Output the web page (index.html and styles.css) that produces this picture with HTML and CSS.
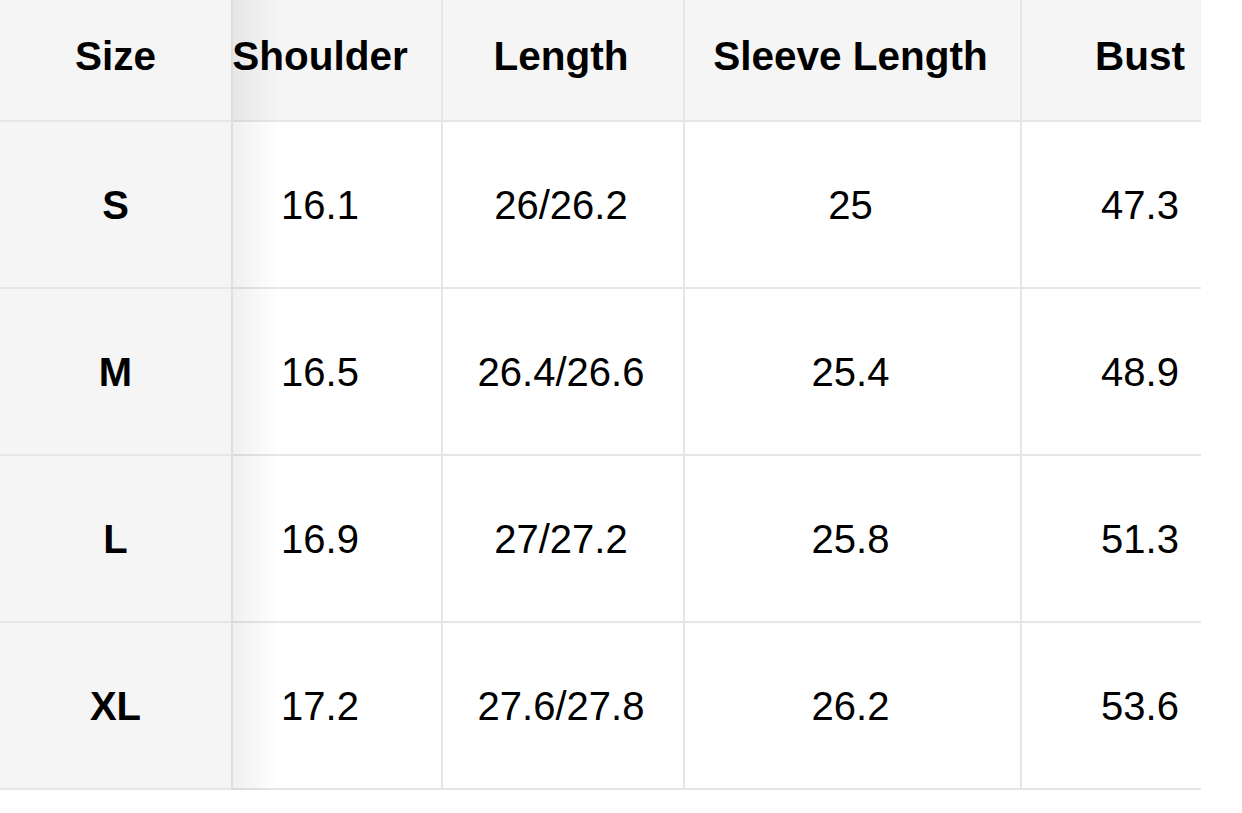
FILE: index.html
```html
<!DOCTYPE html>
<html>
<head>
<meta charset="utf-8">
<link rel="stylesheet" href="styles.css">
</head>
<body>
<div class="wrap">
  <div class="fixed">
    <div class="cell head">Size</div>
    <div class="cell label">S</div>
    <div class="cell label">M</div>
    <div class="cell label">L</div>
    <div class="cell label">XL</div>
    <div class="shade"></div>
  </div>
  <div class="scroller">
    <div class="grid">
      <div class="cell head">Shoulder</div>
      <div class="cell head">Length</div>
      <div class="cell head">Sleeve Length</div>
      <div class="cell head">Bust</div>

      <div class="cell">16.1</div>
      <div class="cell">26/26.2</div>
      <div class="cell">25</div>
      <div class="cell">47.3</div>

      <div class="cell">16.5</div>
      <div class="cell">26.4/26.6</div>
      <div class="cell">25.4</div>
      <div class="cell">48.9</div>

      <div class="cell">16.9</div>
      <div class="cell">27/27.2</div>
      <div class="cell">25.8</div>
      <div class="cell">51.3</div>

      <div class="cell">17.2</div>
      <div class="cell">27.6/27.8</div>
      <div class="cell">26.2</div>
      <div class="cell">53.6</div>
    </div>
  </div>
</div>
</body>
</html>
```
FILE: styles.css
```css
html, body {
  margin: 0;
  padding: 0;
  background: #ffffff;
}
body {
  font-family: "Liberation Sans", Arial, Helvetica, sans-serif;
  color: #000;
}
.wrap {
  width: 1201px;
  display: flex;
  overflow: hidden;
}
.fixed {
  position: relative;
  width: 231px;
  flex: none;
  display: flex;
  flex-direction: column;
  background: #f5f5f5;
  border-right: 2px solid #dedede;
  z-index: 2;
}
.shade {
  position: absolute;
  top: 0;
  bottom: 0;
  left: 233px;
  width: 46px;
  background: linear-gradient(to right, rgba(0,0,0,0.06), rgba(0,0,0,0));
  pointer-events: none;
}
.scroller {
  flex: 1;
  overflow: hidden;
}
.grid {
  margin-left: -34px;
  display: grid;
  grid-template-columns: 244px 242px 337px 236px;
  grid-template-rows: 122px repeat(4, 167px);
  width: 1059px;
}
.cell {
  box-sizing: border-box;
  display: flex;
  align-items: center;
  justify-content: center;
  font-size: 40px;
  border-bottom: 2px solid #e6e6e6;
  border-right: 2px solid #e6e6e6;
  white-space: nowrap;
  height: 167px;
  padding-top: 2px;
}
.fixed .cell {
  border-right: none;
}
.head {
  height: 122px;
  font-weight: bold;
  background: #f5f5f5;
  padding-top: 0;
  padding-bottom: 8px;
  font-size: 40.5px;
}
.label {
  font-weight: bold;
}
.grid .cell:nth-child(4n+2),
.grid .cell:nth-child(4n+3) {
  padding-right: 4px;
}
.grid .cell:nth-child(4n) {
  border-right: none;
}
```
